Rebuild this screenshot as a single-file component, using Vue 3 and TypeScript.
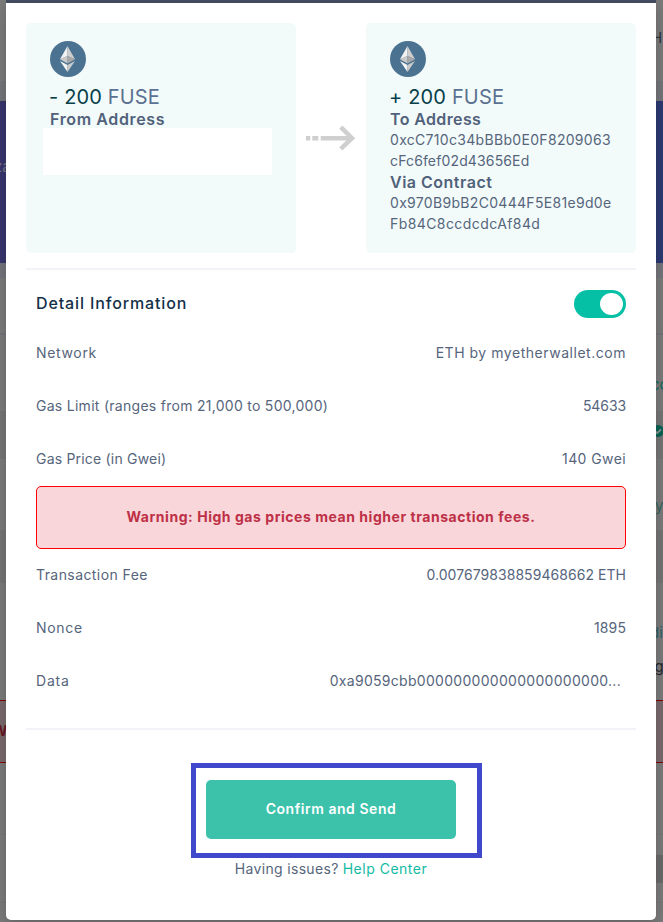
<script setup lang="ts">
interface Row {
  label: string
  value: string
  labelSpacing: number
  valueSpacing: number
  inset?: boolean
}

const gasRows: Row[] = [
  { label: 'Network', value: 'ETH by myetherwallet.com', labelSpacing: 0.66, valueSpacing: 0.53 },
  { label: 'Gas Limit (ranges from 21,000 to 500,000)', value: '54633', labelSpacing: 0.28, valueSpacing: -0.1 },
  { label: 'Gas Price (in Gwei)', value: '140 Gwei', labelSpacing: 0.2, valueSpacing: 0.4 },
]

const feeRows: Row[] = [
  { label: 'Transaction Fee', value: '0.007679838859468662 ETH', labelSpacing: 0.42, valueSpacing: 0.05 },
  { label: 'Nonce', value: '1895', labelSpacing: 0.68, valueSpacing: 0.1 },
  { label: 'Data', value: '0xa9059cbb000000000000000000000...', labelSpacing: 0.83, valueSpacing: 0.29, inset: true },
]

const spacing = (px: number) => ({ letterSpacing: `${px}px` })
</script>

<template>
  <div class="page">
    <div class="backdrop" aria-hidden="true">
      <div class="band nav"></div>
      <div class="band sub"></div>
      <div class="band hero"></div>
      <div class="band strip"></div>
      <div class="band plain-a"></div>
      <div class="band rule"></div>
      <div class="band plain-b"></div>
      <div class="band field-a"></div>
      <div class="band plain-c"></div>
      <div class="band field-b"></div>
      <div class="band plain-d"></div>
      <div class="band alert-band"></div>
      <div class="band plain-e"></div>
      <div class="band foot"></div>
      <span class="peek peek-h">H</span>
      <span class="peek peek-za">za</span>
      <span class="peek peek-co">co</span>
      <svg class="peek peek-check" viewBox="0 0 12 12">
        <circle cx="6" cy="6" r="6" />
        <path d="M3 6.1l2.1 2.1L9 4.3" />
      </svg>
      <span class="peek peek-y">y</span>
      <span class="peek peek-di">di</span>
      <span class="peek peek-ag">ag</span>
      <span class="peek peek-w">W</span>
      <div class="peek peek-block"></div>
    </div>

    <main class="modal">
      <section class="transfer">
        <article class="card">
          <svg class="coin" viewBox="0 0 36 36">
            <circle cx="18" cy="18" r="18" fill="#4b7391" />
            <path d="M17.5 5L10 18.3 17.5 15z" fill="#f2f2f2" />
            <path d="M17.5 5L25 18.3 17.5 15z" fill="#cecece" />
            <path d="M17.5 14.8L10 18.3l7.5 4.2z" fill="#c9c9c9" />
            <path d="M17.5 14.8l7.5 3.5-7.5 4.2z" fill="#a8a8a8" />
            <path d="M10 19.9l7.5 4.2V31z" fill="#f4f4f4" />
            <path d="M25 19.9l-7.5 4.2V31z" fill="#cbcbcb" />
          </svg>
          <p class="amount">- 200 <span>FUSE</span></p>
          <h3 class="from">From Address</h3>
          <div class="blank"></div>
        </article>

        <div class="arrow">
          <svg viewBox="0 0 50 26">
            <path d="M0 11h4.3v4.5H0zM6.3 11h6v4.5h-6zM14.7 11H43v4.5H14.7z" />
            <path class="head" d="M34.8 2.2L46 13.2 34.8 23.8" />
          </svg>
        </div>

        <article class="card">
          <svg class="coin" viewBox="0 0 36 36">
            <circle cx="18" cy="18" r="18" fill="#4b7391" />
            <path d="M17.5 5L10 18.3 17.5 15z" fill="#f2f2f2" />
            <path d="M17.5 5L25 18.3 17.5 15z" fill="#cecece" />
            <path d="M17.5 14.8L10 18.3l7.5 4.2z" fill="#c9c9c9" />
            <path d="M17.5 14.8l7.5 3.5-7.5 4.2z" fill="#a8a8a8" />
            <path d="M10 19.9l7.5 4.2V31z" fill="#f4f4f4" />
            <path d="M25 19.9l-7.5 4.2V31z" fill="#cbcbcb" />
          </svg>
          <p class="amount">+ 200 <span>FUSE</span></p>
          <h3 class="to">To Address</h3>
          <p class="address">0xcC710c34bBBb0E0F8209063<br /><span class="to-end">cFc6fef02d43656Ed</span></p>
          <h3 class="via">Via Contract</h3>
          <p class="address">0x970B9bB2C0444F5E81e9d0e<br /><span class="via-end">Fb84C8ccdcdcAf84d</span></p>
        </article>
      </section>

      <section class="details">
        <header class="details-head">
          <h2>Detail Information</h2>
          <div class="toggle" role="switch" aria-checked="true"><i></i></div>
        </header>

        <div v-for="row in gasRows" :key="row.label" class="row">
          <span :style="spacing(row.labelSpacing)">{{ row.label }}</span>
          <span :style="spacing(row.valueSpacing)">{{ row.value }}</span>
        </div>

        <div class="warning">Warning: High gas prices mean higher transaction fees.</div>

        <div v-for="row in feeRows" :key="row.label" class="row fee" :class="{ inset: row.inset }">
          <span :style="spacing(row.labelSpacing)">{{ row.label }}</span>
          <span :style="spacing(row.valueSpacing)">{{ row.value }}</span>
        </div>
      </section>

      <footer class="actions">
        <div class="highlight">
          <button type="button">Confirm and Send</button>
        </div>
        <p class="help"><span>Having issues?</span><a>Help Center</a></p>
      </footer>
    </main>
  </div>
</template>

<style>
body {
  margin: 0;
  background: #777;
}
</style>

<style scoped>
* {
  box-sizing: border-box;
}

h2,
h3,
p {
  margin: 0;
}

.page {
  position: relative;
  height: 922px;
  padding: 0 7px 2px 6px;
  overflow: hidden;
  background: #7b7b7b;
  font-family: Inter, "Liberation Sans", sans-serif;
  font-size: 14px;
  font-weight: 380;
  color: #56657c;
}

.backdrop {
  position: absolute;
  inset: 0;
}

.nav { height: 81px; }
.sub { height: 20px; background: #74757a; }
.hero { height: 162px; background: linear-gradient(90deg, #38356e, #2b3a73); }
.strip { height: 15px; background: #74757c; }
.plain-a { height: 55px; }
.rule { height: 2px; background: #73747b; }
.plain-b { height: 76px; }
.field-a { height: 48px; background: #757575; }
.plain-c { height: 71px; }
.field-b { height: 53px; background: #747474; }
.plain-d { height: 117px; }
.alert-band {
  height: 63px;
  background: #796a6c;
  border: solid #860000;
  border-width: 1px 0;
}
.plain-e { height: 71px; }
.foot {
  height: 69px;
  border: solid #767678;
  border-width: 1px 0;
}

.peek {
  position: absolute;
  font-size: 15px;
  line-height: 20px;
}
.peek-h { left: 651px; top: 28px; color: #2c3740; }
.peek-za { left: -6px; top: 157px; color: #777788; }
.peek-co { left: 651px; top: 375px; color: #0b695d; }
.peek-check { left: 652px; top: 425px; width: 12px; height: 12px; fill: #066353; }
.peek-check path { fill: none; stroke: #8b9692; stroke-width: 1.8; }
.peek-y { left: 655px; top: 496px; color: #35655e; }
.peek-di { left: 650px; top: 623px; color: #2f6069; }
.peek-ag { left: 646px; top: 657px; color: #23262c; }
.peek-w { left: -8px; top: 721px; color: #671722; font-weight: 700; }
.peek-block { left: 656px; top: 855px; width: 7px; height: 28px; background: #6a6a6a; }

.modal {
  position: relative;
  height: 920px;
  padding: 0 20px;
  border-top: 3px solid #414b5d;
  border-radius: 0 0 5px 5px;
  background: #fff;
  box-shadow: 0 5px 15px rgba(0, 0, 0, 0.2);
}

.transfer {
  display: flex;
  height: 267px;
  padding: 20px 0 15px;
  border-bottom: 2px solid #f2f3f8;
}

.card {
  width: 270px;
  height: 230px;
  padding: 18px 24px;
  border-radius: 5px;
  background: #f2fbfa;
}

.coin {
  display: block;
  width: 36px;
  height: 36px;
}

.amount {
  margin: 8px 0 0 -1px;
  font-size: 20px;
  line-height: 24px;
  font-weight: 400;
  letter-spacing: 0.16px;
  white-space: nowrap;
  color: #07404a;
}
.amount span { color: #5b7191; }

h3 {
  font-size: 16px;
  line-height: 21px;
  font-weight: 600;
  color: #51617a;
}
.from { letter-spacing: 0.62px; }
.to { letter-spacing: 0.38px; }
.via { letter-spacing: 0.5px; }

.blank {
  width: 229px;
  height: 47px;
  margin: -2px 0 0 -7px;
  background: #fff;
}

.address {
  margin: -1px 0 1px;
  line-height: 21px;
  letter-spacing: 0.31px;
  white-space: nowrap;
}
.to-end { letter-spacing: 0.14px; }
.via-end { letter-spacing: 0.42px; }

.arrow {
  display: flex;
  width: 70px;
  height: 230px;
  align-items: center;
  justify-content: center;
}
.arrow svg {
  width: 50px;
  height: 26px;
  fill: #cfcfcf;
}
.arrow .head {
  fill: none;
  stroke: #cfcfcf;
  stroke-width: 4.5;
}

.details {
  padding: 0 10px 20px;
  border-bottom: 2px solid #f2f3f8;
}

.details-head {
  display: flex;
  height: 56px;
  padding-top: 20px;
  align-items: flex-start;
  justify-content: space-between;
}

h2 {
  font-size: 16px;
  line-height: 27px;
  font-weight: 550;
  letter-spacing: 0.87px;
  color: #143049;
}

.toggle {
  display: flex;
  width: 52px;
  height: 28px;
  padding: 3px;
  justify-content: flex-end;
  border-radius: 14px;
  background: #05c0a5;
}
.toggle i {
  width: 23px;
  height: 22px;
  border-radius: 50%;
  background: #fff;
}

.row {
  display: flex;
  height: 53px;
  align-items: center;
  justify-content: space-between;
  white-space: nowrap;
}
.row.fee { padding-bottom: 2px; }
.row.inset { padding-right: 5px; }

.warning {
  display: flex;
  height: 63px;
  margin-top: 1px;
  padding-bottom: 2px;
  align-items: center;
  justify-content: center;
  border: 1px solid #f00;
  border-radius: 5px;
  background: #f8d6da;
  color: #be3046;
  font-weight: 700;
  letter-spacing: 0.54px;
}

.actions {
  display: flex;
  flex-direction: column;
  align-items: center;
  padding-top: 33px;
}

.highlight {
  width: 291px;
  height: 95px;
  margin-left: 11px;
  padding: 12px 10px;
  border: 5px solid #4048cc;
}

button {
  display: block;
  width: 250px;
  height: 59px;
  padding: 0 0 2px;
  border: 0;
  border-radius: 5px;
  background: #3cc2ab;
  color: #fff;
  font: 600 14px Inter, "Liberation Sans", sans-serif;
  letter-spacing: 0.54px;
}

.help {
  display: flex;
  gap: 4px;
  line-height: 22px;
  letter-spacing: 0.33px;
}
.help a {
  letter-spacing: 0.5px;
  color: #13bba4;
}
</style>
